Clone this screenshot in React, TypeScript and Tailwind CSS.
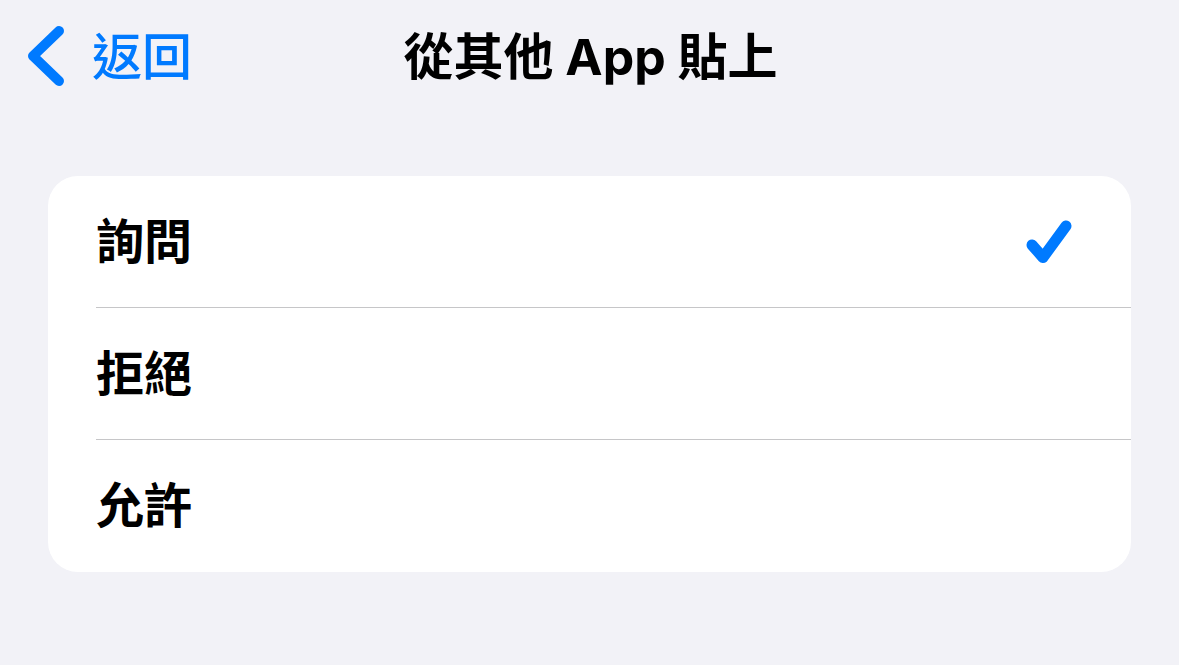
import React from 'react';

const FONT = "font-['Inter','Noto_Sans_CJK_TC',sans-serif]";

const options = ['詢問', '拒絕', '允許'];

const BackChevron = () => (
  <svg width="40" height="64" viewBox="0 0 40 64" fill="none">
    <path d="M33 6 L7 31 L33 56" stroke="#007aff" strokeWidth="10" strokeLinecap="round" strokeLinejoin="round" />
  </svg>
);

const Check = () => (
  <svg width="50" height="48" viewBox="0 0 50 48" fill="none">
    <path d="M10 27 L21 39.5 L44 8" stroke="#007aff" strokeWidth="11" strokeLinecap="round" strokeLinejoin="round" />
  </svg>
);

export default function App() {
  const [selected, setSelected] = React.useState(0);

  return (
    <div className={`min-h-screen w-full bg-[#f2f2f7] ${FONT}`}>
      {/* Nav bar */}
      <header className="grid grid-cols-[1fr_auto_1fr] items-center h-[114px] pl-[26px] pr-[24px]">
        <button className="flex items-center gap-[26px] text-[#007aff] justify-self-start">
          <BackChevron />
          <span className="text-[50px] leading-none font-medium">返回</span>
        </button>
        <h1 className="text-[50px] leading-none font-bold text-black whitespace-nowrap">從其他 App 貼上</h1>
        <div />
      </header>

      {/* Options list */}
      <div className="mx-[48px] mt-[62px] bg-white rounded-[30px] overflow-hidden">
        {options.map((label, i) => (
          <div key={label}>
            {i > 0 && <div className="ml-[48px] h-px bg-[#c6c6c8]" />}
            <button
              onClick={() => setSelected(i)}
              className={`w-full flex items-center justify-between pl-[48px] pr-[59px] ${i === 2 ? 'h-[132px]' : 'h-[131px]'}`}
            >
              <span className="text-[48px] leading-none font-semibold text-black">{label}</span>
              {selected === i && <Check />}
            </button>
          </div>
        ))}
      </div>
    </div>
  );
}
